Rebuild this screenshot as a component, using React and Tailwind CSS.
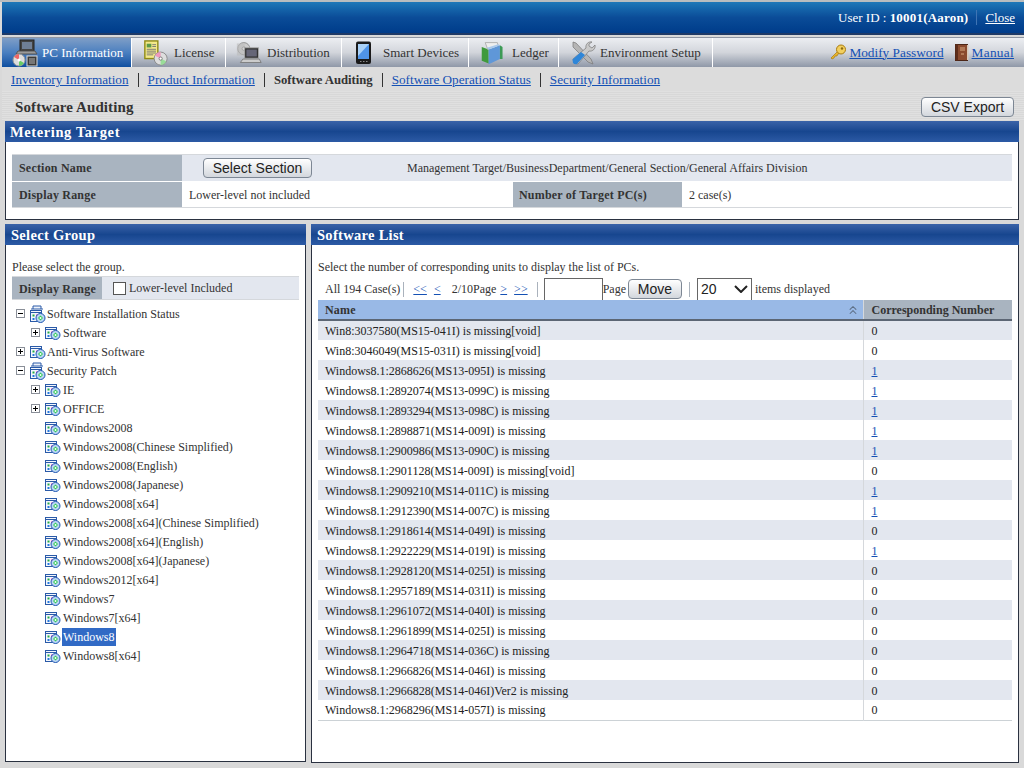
import { ChevronsUp } from "lucide-react";

const tabs = [
  { label: "PC Information", icon: "pc", w: "w-[130px]", pl: "pl-[40px]", il: "left-[10px]", active: true },
  { label: "License", icon: "license", w: "w-[94px]", pl: "pl-[42px]", il: "left-[11px]" },
  { label: "Distribution", icon: "dist", w: "w-[116px]", pl: "pl-[41px]", il: "left-[10px]" },
  { label: "Smart Devices", icon: "phone", w: "w-[127px]", pl: "pl-[41px]", il: "left-[13px]" },
  { label: "Ledger", icon: "ledger", w: "w-[90px]", pl: "pl-[43px]", il: "left-[11px]" },
  { label: "Environment Setup", icon: "tools", w: "w-[154px]", pl: "pl-[41px]", il: "left-[11px]" },
];

const subnav = ["Inventory Information", "Product Information", "Software Auditing", "Software Operation Status", "Security Information"];

const tree = [
  { label: "Software Installation Status", level: 0, toggle: "-" },
  { label: "Software", level: 1, toggle: "+" },
  { label: "Anti-Virus Software", level: 0, toggle: "+" },
  { label: "Security Patch", level: 0, toggle: "-" },
  { label: "IE", level: 1, toggle: "+" },
  { label: "OFFICE", level: 1, toggle: "+" },
  { label: "Windows2008", level: 1 },
  { label: "Windows2008(Chinese Simplified)", level: 1 },
  { label: "Windows2008(English)", level: 1 },
  { label: "Windows2008(Japanese)", level: 1 },
  { label: "Windows2008[x64]", level: 1 },
  { label: "Windows2008[x64](Chinese Simplified)", level: 1 },
  { label: "Windows2008[x64](English)", level: 1 },
  { label: "Windows2008[x64](Japanese)", level: 1 },
  { label: "Windows2012[x64]", level: 1 },
  { label: "Windows7", level: 1 },
  { label: "Windows7[x64]", level: 1 },
  { label: "Windows8", level: 1, selected: true },
  { label: "Windows8[x64]", level: 1 },
];

const rows = [
  ["Win8:3037580(MS15-041I) is missing[void]", "0"],
  ["Win8:3046049(MS15-031I) is missing[void]", "0"],
  ["Windows8.1:2868626(MS13-095I) is missing", "1"],
  ["Windows8.1:2892074(MS13-099C) is missing", "1"],
  ["Windows8.1:2893294(MS13-098C) is missing", "1"],
  ["Windows8.1:2898871(MS14-009I) is missing", "1"],
  ["Windows8.1:2900986(MS13-090C) is missing", "1"],
  ["Windows8.1:2901128(MS14-009I) is missing[void]", "0"],
  ["Windows8.1:2909210(MS14-011C) is missing", "1"],
  ["Windows8.1:2912390(MS14-007C) is missing", "1"],
  ["Windows8.1:2918614(MS14-049I) is missing", "0"],
  ["Windows8.1:2922229(MS14-019I) is missing", "1"],
  ["Windows8.1:2928120(MS14-025I) is missing", "0"],
  ["Windows8.1:2957189(MS14-031I) is missing", "0"],
  ["Windows8.1:2961072(MS14-040I) is missing", "0"],
  ["Windows8.1:2961899(MS14-025I) is missing", "0"],
  ["Windows8.1:2964718(MS14-036C) is missing", "0"],
  ["Windows8.1:2966826(MS14-046I) is missing", "0"],
  ["Windows8.1:2966828(MS14-046I)Ver2 is missing", "0"],
  ["Windows8.1:2968296(MS14-057I) is missing", "0"],
];

function TabIcon({ name }) {
  if (name === "pc")
    return (
      <svg width="26" height="28" viewBox="0 0 26 28">
        <rect x="8" y="1" width="14" height="11" fill="#444" stroke="#222" />
        <rect x="10" y="3" width="10" height="7" fill="#6f7f96" />
        <path d="M6 12h17l2 3H4z" fill="#9a9a9a" stroke="#555" />
        <rect x="15" y="17" width="10" height="10" fill="#3a3a3a" stroke="#ddd" />
        <rect x="17" y="19" width="6" height="6" fill="#777" />
        <circle cx="7" cy="21" r="6" fill="#ddd" stroke="#999" />
        <path d="M7 21L2 18A6 6 0 0 1 7 15z" fill="#e66" />
        <path d="M7 21l5 3a6 6 0 0 1-5 3z" fill="#6c6" />
        <circle cx="7" cy="21" r="1.5" fill="#fff" />
      </svg>
    );
  if (name === "license")
    return (
      <svg width="26" height="28" viewBox="0 0 28 28">
        <rect x="2" y="1" width="14" height="19" fill="#f3e98a" stroke="#8f8a14" strokeWidth="1.5" />
        <rect x="4" y="4" width="5" height="4" fill="#5a9a4a" />
        <path d="M10 5h4M10 7h4M4 10h10M4 12h10M4 14h10M4 16h7" stroke="#777" />
        <circle cx="19" cy="20" r="7" fill="#ddd" stroke="#888" />
        <path d="M19 20l-6-3a7 7 0 0 1 6-4z" fill="#e9b" />
        <path d="M19 20l6 3a7 7 0 0 1-6 4z" fill="#9d9" />
        <circle cx="19" cy="20" r="1.7" fill="#fff" stroke="#777" />
      </svg>
    );
  if (name === "dist")
    return (
      <svg width="26" height="26" viewBox="0 0 30 28">
        <circle cx="9" cy="9" r="7" fill="#ccc" stroke="#888" />
        <circle cx="9" cy="9" r="2" fill="#fff" stroke="#777" />
        <rect x="1" y="3" width="9" height="14" fill="#bbb" opacity="0.6" />
        <rect x="10" y="8" width="16" height="12" fill="#333" stroke="#aaa" />
        <rect x="12" y="10" width="12" height="8" fill="#667" />
        <path d="M8 21h19l2 4H5z" fill="#ccc" stroke="#777" />
      </svg>
    );
  if (name === "phone")
    return (
      <svg width="18" height="24" viewBox="0 0 18 24">
        <rect x="1" y="0.5" width="15" height="22.5" rx="2" fill="#1a1a1a" />
        <rect x="3" y="3" width="11" height="15" fill="#4f94e8" />
        <path d="M3 3h11L3 15z" fill="#a9d1f7" />
        <path d="M5 20.5h1.5M8 20.5h1.5M11 20.5h1.5" stroke="#888" />
      </svg>
    );
  if (name === "ledger")
    return (
      <svg width="26" height="26" viewBox="0 0 30 26">
        <path d="M2 6l8 3v16l-8-3z" fill="#3f9a3c" />
        <path d="M6 1h14l2 8H9z" fill="#eee" stroke="#aaa" />
        <path d="M10 9l13-5v16l-13 6z" fill="#5f97d8" />
        <path d="M10 9l-2-2 13-4 2 1z" fill="#a8c8ea" />
        <path d="M23 4l3 2v14l-3 0z" fill="#3c9a55" />
      </svg>
    );
  return (
    <svg width="26" height="26" viewBox="0 0 26 26">
      <path d="M3 2l3 1 15 16 2 5-5-2L3 7z" fill="#b5b5b5" stroke="#777" strokeWidth="0.7" />
      <path d="M22 2a5 5 0 0 0-6 6L3 19l1 4 4 1L19 11a5 5 0 0 0 6-6l-3 3-3-2 0-2z" fill="#c9c9c9" stroke="#777" strokeWidth="0.7" />
      <path d="M2.5 19.5L11 12l4 3-8 9q-2 1-4-1z" fill="#2f86d8" />
    </svg>
  );
}

function KeyIcon() {
  return (
    <svg width="17" height="17" viewBox="0 0 17 17">
      <path d="M1 14l7-7 2 2-2 1-1 2-2 0-1 2-2 1z" fill="#e9b52c" stroke="#a97b10" strokeWidth="0.7" />
      <circle cx="11" cy="5.5" r="4.5" fill="#f2cf5e" stroke="#a97b10" />
      <circle cx="12" cy="4.5" r="1.2" fill="#8a6a10" />
    </svg>
  );
}

function BookIcon() {
  return (
    <svg width="14" height="17" viewBox="0 0 14 17">
      <rect x="0.5" y="0.5" width="12" height="16" fill="#8a4a2e" stroke="#4c2616" />
      <rect x="0.5" y="0.5" width="2.5" height="16" fill="#5e2d1a" />
      <path d="M5 4h5M5 6h5M6 10h3" stroke="#d8a980" />
      <rect x="12" y="1" width="1.5" height="15" fill="#d9c9b8" />
    </svg>
  );
}

function TreeIcon({ open }) {
  return (
    <svg width="16" height={open ? 18 : 14} viewBox={open ? "0 0 16 18" : "0 0 16 14"} className="shrink-0">
      <g transform={open ? "translate(0 4)" : "translate(0 0)"}>
        {open && <path d="M3 0V-3H11V0M1 0H13" fill="#eef3fb" stroke="#2a5aa8" />}
        <rect x="0.5" y="1.5" width="11" height="11" fill="#f4f7fd" stroke="#2a5aa8" />
        <path d="M0.5 3.5h11" stroke="#2a5aa8" />
        <path d="M2.5 5.5h2v2h-2z" fill="#22aa44" />
        <path d="M2.5 9h2v2h-2z" fill="#2277dd" />
        <path d="M6 5.5h2v2h-2z" fill="#dd33bb" />
        <circle cx="10.5" cy="9" r="4.5" fill="#bcd6f5" stroke="#1d55b0" />
        <path d="M10.5 6.5l2.5 2.5-2.5 2.5-2.5-2.5z" fill="#33cc55" />
        <circle cx="10.5" cy="9" r="1" fill="#fff" />
      </g>
    </svg>
  );
}

function Toggle({ kind }) {
  return (
    <span className="relative w-[9px] h-[9px] border border-[#8a8f98] bg-white shrink-0 flex items-center justify-center">
      <span className="w-[5px] h-px bg-black" />
      {kind === "+" && <span className="absolute w-px h-[5px] bg-black" />}
    </span>
  );
}

function Button({ children, className }) {
  return (
    <button
      className={`font-['Liberation_Sans',sans-serif] text-[14px] leading-none text-[#222] border border-[#7d8794] rounded-[4px] bg-gradient-to-b from-white to-[#d3d7dd] ${className}`}
    >
      {children}
    </button>
  );
}

function PanelTitle({ children }) {
  return (
    <div className="h-[21px] shrink-0 pl-[6px] pt-[2px] flex items-center text-[14.5px] font-bold text-white tracking-[0.3px] bg-gradient-to-b from-[#3a63a8] via-[#17468f] to-[#2c5aa5]">
      {children}
    </div>
  );
}

function Sep({ className }) {
  return <span className={`w-px h-[15px] bg-[#aab2bc] shrink-0 ${className}`} />;
}

export default function App() {
  return (
    <div className="w-[1024px] h-[768px] overflow-hidden flex flex-col bg-[#d9d9d9] border-t-2 border-t-[#b9bdbf] font-['Liberation_Serif',serif] text-[12px] text-[#333]">
      {/* top bar */}
      <header className="h-[33px] shrink-0 ml-[2px] flex items-center justify-end pr-[9px] text-white text-[13px] bg-gradient-to-b from-[#1f78b8] via-[#0b4c98] to-[#003c8a] border-b-2 border-b-[#1f3a66]">
        <span>User ID : <b className="tracking-[0.2px]">10001(Aaron)</b></span>
        <span className="w-px h-[15px] bg-[#3f74b4] ml-[8px] mr-[8px]" />
        <a className="underline">Close</a>
      </header>

      {/* main tabs */}
      <nav className="h-[30px] shrink-0 mt-[2px] ml-[2px] flex items-stretch border-t border-t-[#8f96a3] bg-gradient-to-b from-[#eceef2] via-[#d2d5db] to-[#8f98a8] text-[13px]">
        {tabs.map(t => (
          <div
            key={t.label}
            className={`relative ${t.w} ${t.pl} shrink-0 flex items-center border-r border-r-white ${t.active ? "text-white bg-gradient-to-b from-[#7f9ec6] via-[#4a7fc0] to-[#0d4fa0]" : "text-[#333]"}`}
          >
            <span className={`absolute ${t.il} top-0 bottom-0 flex items-center`}><TabIcon name={t.icon} /></span>
            {t.label}
          </div>
        ))}
        <div className="ml-auto flex items-center pr-[10px] text-[13.3px] text-[#1450b4]">
          <KeyIcon />
          <a className="underline ml-[2px]">Modify Password</a>
          <span className="ml-[11px] mr-[3px] flex"><BookIcon /></span>
          <a className="underline tracking-[0.3px]">Manual</a>
        </div>
      </nav>

      {/* sub nav */}
      <div className="h-[24px] shrink-0 ml-[2px] pl-[9px] pt-[2px] flex items-center bg-[#dcdcdc] text-[13.2px]">
        {subnav.map((s, i) => (
          <span key={s} className="flex items-center">
            {i > 0 && <span className="w-px h-[14px] bg-[#333] mx-[9px]" />}
            {s === "Software Auditing" ? <b className="text-[#333] text-[12.7px] pt-px">{s}</b> : <a className="underline text-[#1450b4]">{s}</a>}
          </span>
        ))}
      </div>

      {/* page title */}
      <div className="h-[30px] shrink-0 ml-[2px] pl-[13px] pr-[10px] pt-[2px] flex items-center justify-between bg-[repeating-linear-gradient(to_bottom,#e0e0e0_0,#e0e0e0_1px,#d8d8d8_1px,#d8d8d8_2px)]">
        <b className="text-[15px] tracking-[0.1px]">Software Auditing</b>
        <Button className="w-[93px] h-[20px]">CSV Export</Button>
      </div>

      {/* metering target */}
      <section className="h-[99px] shrink-0 mx-[5px] bg-white border-x border-b border-[#2a3140] flex flex-col">
        <div className="-mx-px"><PanelTitle><span className="tracking-[0.6px] ml-[-1px]">Metering Target</span></PanelTitle></div>
        <div className="mt-[12px] mx-[6px] border-y border-y-[#d5d8dc] flex flex-col">
          <div className="h-[26px] flex bg-[#e3e7ef]">
            <div className="w-[170px] pl-[7px] flex items-center font-bold bg-[#a9b4c0] tracking-[0.2px]">Section Name</div>
            <div className="flex-1 flex items-center pl-[21px]">
              <Button className="w-[109px] h-[20px]">Select Section</Button>
              <span className="ml-[95px]">Management Target/BusinessDepartment/General Section/General Affairs Division</span>
            </div>
          </div>
          <div className="h-[25px] mt-px flex">
            <div className="w-[170px] pl-[7px] flex items-center font-bold bg-[#a9b4c0] tracking-[0.2px]">Display Range</div>
            <div className="w-[331px] pl-[7px] flex items-center">Lower-level not included</div>
            <div className="w-[169px] pl-[6px] flex items-center font-bold bg-[#a9b4c0] tracking-[0.2px]">Number of Target PC(s)</div>
            <div className="pl-[7px] flex items-center">2 case(s)</div>
          </div>
        </div>
      </section>

      {/* two panels */}
      <div className="h-[539px] shrink-0 mt-[4px] mx-[5px] flex gap-[5px]">
        <section className="w-[301px] h-[538px] bg-white border-x border-b border-[#2a3140] flex flex-col">
          <div className="-mx-px"><PanelTitle>Select Group</PanelTitle></div>
          <p className="mt-[14px] ml-[6px] leading-[16px]">Please select the group.</p>
          <div className="mt-[1px] mx-[6px] h-[24px] flex bg-[#e3e7ef] border-y border-y-[#d5d8dc]">
            <div className="w-[90px] pl-[7px] pt-px flex items-center font-bold bg-[#a9b4c0] tracking-[0.2px]">Display Range</div>
            <label className="flex items-center pl-[11px]">
              <span className="w-[13px] h-[13px] border border-[#555] bg-white" />
              <span className="ml-[3px]">Lower-level Included</span>
            </label>
          </div>
          <div className="mt-[4px] flex flex-col">
            {tree.map(n => (
              <div key={n.label} className={`h-[19px] flex items-center ${n.level === 0 ? "pl-[10px]" : "pl-[25px]"}`}>
                <span className="w-[15px] flex items-center shrink-0">{n.toggle && <Toggle kind={n.toggle} />}</span>
                <span className={`w-[15px] flex justify-start shrink-0 ml-[-1px] ${n.level === 0 ? "mr-[1px]" : "mr-[2px]"}`}><TreeIcon open={n.toggle === "-"} /></span>
                <span className={n.selected ? "bg-[#316ac5] text-white px-px" : "px-px"}>{n.label}</span>
              </div>
            ))}
          </div>
        </section>

        <section className="flex-1 h-[539px] bg-white border-x border-b border-[#2a3140] flex flex-col">
          <div className="-mx-px"><PanelTitle>Software List</PanelTitle></div>
          <p className="mt-[14px] ml-[6px] leading-[16px]">Select the number of corresponding units to display the list of PCs.</p>
          <div className="mx-[6px] mt-[1px] h-[24px] pt-[2px] flex items-center pl-[7px]">
            <span>All 194 Case(s)</span>
            <Sep className="ml-[3px]" />
            <a className="underline text-[#1450b4] ml-[9px]">&lt;&lt;</a>
            <a className="underline text-[#1450b4] ml-[7px]">&lt;</a>
            <span className="ml-[11px]">2/10Page</span>
            <a className="underline text-[#1450b4] ml-[4px]">&gt;</a>
            <a className="underline text-[#1450b4] ml-[7px]">&gt;&gt;</a>
            <Sep className="ml-[9px]" />
            <span className="w-[59px] h-[23px] ml-[6px] border border-[#666] bg-white shrink-0" />
            <span>Page</span>
            <Button className="w-[54px] h-[20px] ml-[2px]">Move</Button>
            <Sep className="ml-[7px]" />
            <span className="w-[55px] h-[23px] ml-[7px] border border-[#666] bg-white flex items-center justify-between pl-[3px] pr-[3px] font-['Liberation_Sans',sans-serif] text-[14px] text-[#222] shrink-0">
              20
              <svg width="14" height="8" viewBox="0 0 14 8" fill="none" stroke="#222" strokeWidth="2"><path d="M1 1l6 6 6-6" /></svg>
            </span>
            <span className="ml-[3px]">items displayed</span>
          </div>
          <table className="mx-[6px] w-[694px] border-collapse table-fixed">
            <thead>
              <tr className="h-[20px] border-b-2 border-b-[#5c6674] font-bold">
                <th className="w-[545px] text-left pl-[7px] pt-px bg-[#99b9e6] relative tracking-[0.2px]">
                  Name
                  <ChevronsUp size={14} strokeWidth={1.75} className="absolute right-[3px] top-[3px] text-[#5d6e85]" />
                </th>
                <th className="text-left pl-[8px] pt-px bg-[#a9b4c0] border-l border-l-[#d5d8dc]">Corresponding Number</th>
              </tr>
            </thead>
            <tbody>
              {rows.map((r, i) => (
                <tr key={r[0]} className={`h-[20px] ${i % 2 === 0 ? "bg-[#e3e7ef]" : "bg-white"} ${i === rows.length - 1 ? "border-b border-b-[#ccd2d6]" : ""}`}>
                  <td className="pl-[7px] pt-px text-[#222]">{r[0]}</td>
                  <td className="pl-[8px] pt-px border-l border-l-[#d5d8dc] text-[#222]">
                    {r[1] === "1" ? <a className="underline text-[#1450b4]">1</a> : r[1]}
                  </td>
                </tr>
              ))}
            </tbody>
          </table>
        </section>
      </div>
    </div>
  );
}
